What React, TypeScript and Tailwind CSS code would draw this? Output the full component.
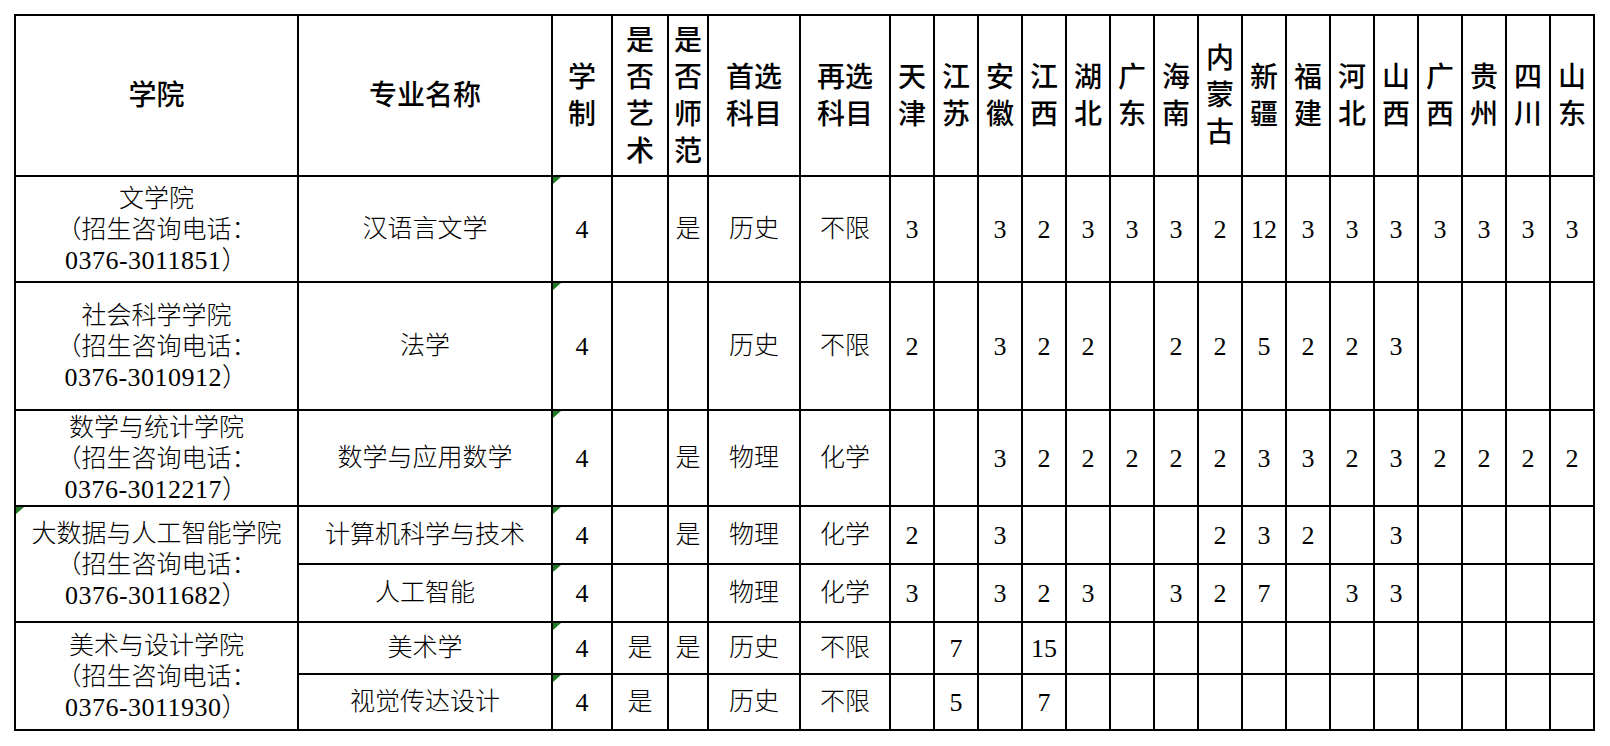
import React from "react";

type Row = {
  college?: string[];
  span?: number;
  tri?: boolean;
  major: string;
  years: string;
  art: string;
  normal: string;
  first: string;
  second: string;
  counts: string[];
};

const provinces: string[][] = [
  ["天", "津"],
  ["江", "苏"],
  ["安", "徽"],
  ["江", "西"],
  ["湖", "北"],
  ["广", "东"],
  ["海", "南"],
  ["内", "蒙", "古"],
  ["新", "疆"],
  ["福", "建"],
  ["河", "北"],
  ["山", "西"],
  ["广", "西"],
  ["贵", "州"],
  ["四", "川"],
  ["山", "东"],
];

const rows: Row[] = [
  {
    college: ["文学院", "（招生咨询电话：", "0376-3011851）"],
    span: 1,
    major: "汉语言文学",
    years: "4",
    art: "",
    normal: "是",
    first: "历史",
    second: "不限",
    counts: ["3", "", "3", "2", "3", "3", "3", "2", "12", "3", "3", "3", "3", "3", "3", "3"],
  },
  {
    college: ["社会科学学院", "（招生咨询电话：", "0376-3010912）"],
    span: 1,
    major: "法学",
    years: "4",
    art: "",
    normal: "",
    first: "历史",
    second: "不限",
    counts: ["2", "", "3", "2", "2", "", "2", "2", "5", "2", "2", "3", "", "", "", ""],
  },
  {
    college: ["数学与统计学院", "（招生咨询电话：", "0376-3012217）"],
    span: 1,
    major: "数学与应用数学",
    years: "4",
    art: "",
    normal: "是",
    first: "物理",
    second: "化学",
    counts: ["", "", "3", "2", "2", "2", "2", "2", "3", "3", "2", "3", "2", "2", "2", "2"],
  },
  {
    college: ["大数据与人工智能学院", "（招生咨询电话：", "0376-3011682）"],
    span: 2,
    tri: true,
    major: "计算机科学与技术",
    years: "4",
    art: "",
    normal: "是",
    first: "物理",
    second: "化学",
    counts: ["2", "", "3", "", "", "", "", "2", "3", "2", "", "3", "", "", "", ""],
  },
  {
    major: "人工智能",
    years: "4",
    art: "",
    normal: "",
    first: "物理",
    second: "化学",
    counts: ["3", "", "3", "2", "3", "", "3", "2", "7", "", "3", "3", "", "", "", ""],
  },
  {
    college: ["美术与设计学院", "（招生咨询电话：", "0376-3011930）"],
    span: 2,
    major: "美术学",
    years: "4",
    art: "是",
    normal: "是",
    first: "历史",
    second: "不限",
    counts: ["", "7", "", "15", "", "", "", "", "", "", "", "", "", "", "", ""],
  },
  {
    major: "视觉传达设计",
    years: "4",
    art: "是",
    normal: "",
    first: "历史",
    second: "不限",
    counts: ["", "5", "", "7", "", "", "", "", "", "", "", "", "", "", "", ""],
  },
];

const Tri = () => (
  <svg
    className="absolute left-0 top-0"
    width="8"
    height="7"
    viewBox="0 0 8 7"
  >
    <polygon points="0,0 8,0 0,7" fill="#1f7a24" />
  </svg>
);

const cell =
  "relative flex items-center justify-center text-center border-r-2 border-b-2 border-black";

const HeadStack = ({ chars }: { chars: string[] }) => (
  <div className={cell}>
    <div className="flex flex-col items-center leading-[37px]">
      {chars.map((c, i) => (
        <span key={i}>{c}</span>
      ))}
    </div>
  </div>
);

export default function App() {
  return (
    <div className="w-[1610px] h-[746px] bg-white pl-[14px] pt-[14px] font-['Liberation_Serif','Noto_Sans_CJK_SC',serif] text-black">
      <div className="grid w-max grid-cols-[283px_254px_60px_56px_40px_92px_90px_repeat(16,44px)] grid-rows-[161px_106px_128px_96px_58px_58px_52px_56px] border-l-2 border-t-2 border-black">
        {/* header */}
        <div className={`${cell} text-[28px] font-medium`}>学院</div>
        <div className={`${cell} text-[28px] font-medium`}>专业名称</div>
        <div className="contents text-[28px] font-medium">
          <HeadStack chars={["学", "制"]} />
          <HeadStack chars={["是", "否", "艺", "术"]} />
          <HeadStack chars={["是", "否", "师", "范"]} />
          <HeadStack chars={["首选", "科目"]} />
          <HeadStack chars={["再选", "科目"]} />
          {provinces.map((p, i) => (
            <HeadStack key={i} chars={p} />
          ))}
        </div>

        {/* body */}
        {rows.map((r, ri) => (
          <React.Fragment key={ri}>
            {r.college && (
              <div
                className={`${cell} ${r.span === 2 ? "row-span-2" : ""} text-[25px] font-light leading-[31px] flex-col`}
              >
                {r.tri && <Tri />}
                <span className="block whitespace-nowrap">{r.college[0]}</span>
                <span className="block whitespace-nowrap">{r.college[1]}</span>
                <span className="block whitespace-nowrap text-[26px] tracking-[0.5px]">
                  {r.college[2]}
                </span>
              </div>
            )}
            <div className={`${cell} text-[25px] font-light`}>{r.major}</div>
            <div className={`${cell} text-[26px]`}>
              <Tri />
              {r.years}
            </div>
            <div className={`${cell} text-[25px] font-light`}>{r.art}</div>
            <div className={`${cell} text-[25px] font-light`}>{r.normal}</div>
            <div className={`${cell} text-[25px] font-light`}>{r.first}</div>
            <div className={`${cell} text-[25px] font-light`}>{r.second}</div>
            {r.counts.map((c, ci) => (
              <div key={ci} className={`${cell} text-[26px]`}>
                {c}
              </div>
            ))}
          </React.Fragment>
        ))}
      </div>
    </div>
  );
}
